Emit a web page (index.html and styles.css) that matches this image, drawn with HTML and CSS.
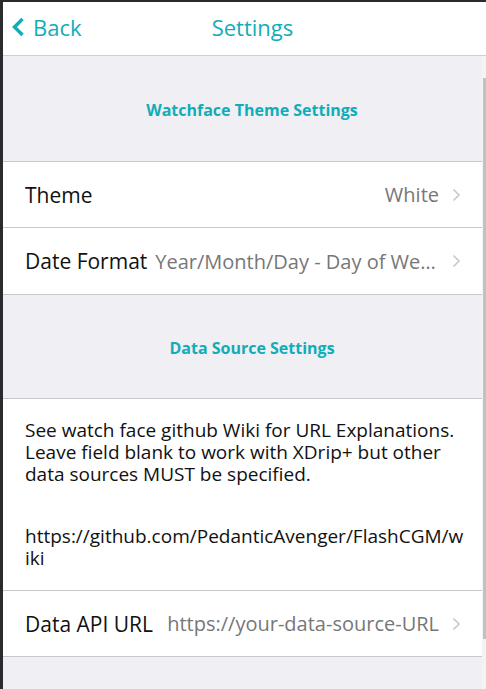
FILE: index.html
```html
<!DOCTYPE html>
<html lang="en">
<head>
    <meta charset="UTF-8">
    <meta name="viewport" content="width=device-width, initial-scale=1.0">
    <title>Settings</title>
    <link rel="stylesheet" href="styles.css">
</head>
<body>
    <div class="app">
        <header class="nav">
            <a class="back" href="#">
                <svg class="back-icon" width="14" height="20" viewBox="0 0 14 20">
                    <path d="M11.5 2 L3.5 10 L11.5 18" fill="none" stroke="#10adb9" stroke-width="3.4"/>
                </svg>
                <span>Back</span>
            </a>
            <h1 class="nav-title">Settings</h1>
        </header>

        <div class="page">
            <main class="content">
                <div class="section-title first">Watchface Theme Settings</div>

                <div class="row">
                    <span class="label">Theme</span>
                    <span class="value">White</span>
                    <svg class="chevron" width="9" height="14" viewBox="0 0 9 14">
                        <path d="M1.5 1.5 L7 7 L1.5 12.5" fill="none" stroke="#c7c7cc" stroke-width="1.6"/>
                    </svg>
                </div>
                <div class="row tall">
                    <span class="label">Date Format</span>
                    <span class="value">Year/Month/Day - Day of Week</span>
                    <svg class="chevron" width="9" height="14" viewBox="0 0 9 14">
                        <path d="M1.5 1.5 L7 7 L1.5 12.5" fill="none" stroke="#c7c7cc" stroke-width="1.6"/>
                    </svg>
                </div>

                <div class="section-title">Data Source Settings</div>

                <div class="note">
                    <p>See watch face github Wiki for URL Explanations. Leave field blank to work with XDrip+ but other data sources MUST be specified.</p>
                    <p class="link">https://github.com/PedanticAvenger/FlashCGM/wiki</p>
                </div>

                <div class="row">
                    <span class="label">Data API URL</span>
                    <span class="value">https://your-data-source-URL</span>
                    <svg class="chevron" width="9" height="14" viewBox="0 0 9 14">
                        <path d="M1.5 1.5 L7 7 L1.5 12.5" fill="none" stroke="#c7c7cc" stroke-width="1.6"/>
                    </svg>
                </div>
            </main>

            <div class="scrollbar">
                <div class="thumb"></div>
            </div>
        </div>
    </div>
</body>
</html>
```

FILE: styles.css
```css
html, body {
    margin: 0;
    height: 100%;
}
body {
    background: #2b2b2e;
    padding: 2px 0 0 3px;
    box-sizing: border-box;
    font-family: "Open Sans", Lato, sans-serif;
    overflow: hidden;
}
.app {
    height: 687px;
    display: flex;
    flex-direction: column;
    background: #efeff4;
}
.nav {
    height: 53px;
    background: white;
    border-bottom: 1px solid #cfcfd2;
    display: flex;
    align-items: center;
    justify-content: center;
    position: relative;
    flex-shrink: 0;
}
.back {
    position: absolute;
    left: 8px;
    top: 10px;
    display: flex;
    align-items: center;
    gap: 8px;
    color: #10adb9;
    text-decoration: none;
    font-size: 22px;
}
.nav-title {
    margin: 0 0 4px 16px;
    font-size: 22px;
    font-weight: normal;
    color: #10adb9;
}
.page {
    flex: 1;
    display: flex;
    min-height: 0;
}
.content {
    flex: 1;
    min-width: 0;
    display: flex;
    flex-direction: column;
}
.section-title {
    height: 104px;
    box-sizing: border-box;
    padding: 3px 0 0 19px;
    display: flex;
    align-items: center;
    justify-content: center;
    color: #10adb9;
    font-size: 16px;
    font-weight: bold;
    border-bottom: 1px solid #c8c7cc;
}
.section-title.first {
    height: 106px;
}
.row {
    height: 66px;
    box-sizing: border-box;
    background: white;
    border-bottom: 1px solid #c8c7cc;
    display: flex;
    align-items: center;
    padding: 0 21px 0 21px;
    font-size: 21px;
}
.row.tall {
    height: 67px;
}
.label {
    color: #111;
    white-space: nowrap;
    padding-left: 1px;
}
.value {
    flex: 1;
    min-width: 0;
    text-align: right;
    color: #777;
    font-size: 20px;
    white-space: nowrap;
    overflow: hidden;
    text-overflow: ellipsis;
    margin: 0 13px 0 8px;
}
.chevron {
    flex-shrink: 0;
}
.note {
    background: white;
    border-bottom: 1px solid #c8c7cc;
    padding: 20px 16px 20px 22px;
    height: 192px;
    box-sizing: border-box;
    font-size: 19px;
    line-height: 22px;
    color: #111;
}
.note p {
    margin: 0;
}
.note .link {
    margin-top: 40px;
    word-break: break-all;
}
.scrollbar {
    width: 4px;
    background: #f3f3f3;
    padding-top: 22px;
    display: flex;
    justify-content: flex-end;
}
.thumb {
    width: 3px;
    height: 561px;
    background: #c1c1c1;
}
```
